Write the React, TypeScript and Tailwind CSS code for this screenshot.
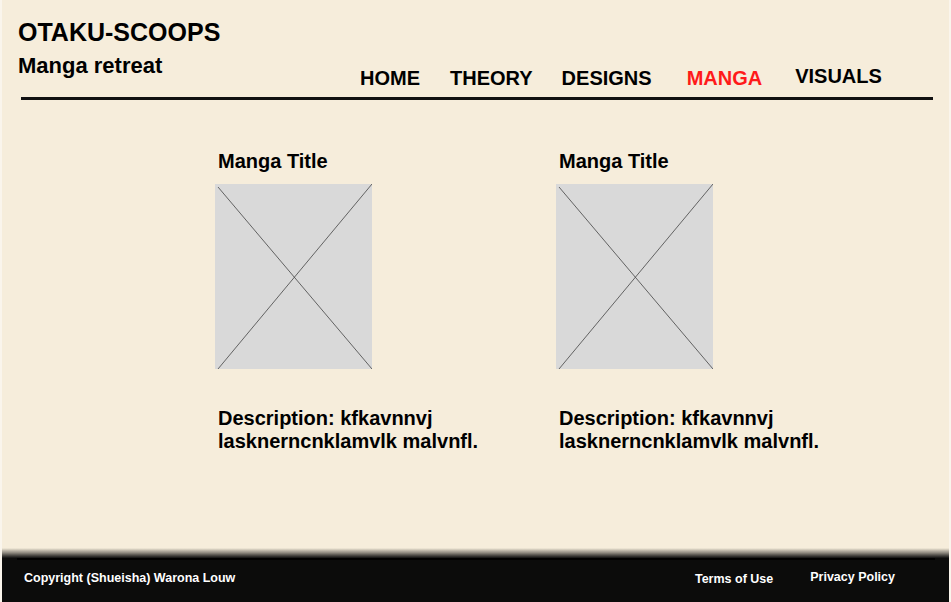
import React from 'react';

function Placeholder() {
  return (
    <div className="w-[157px] h-[185px] bg-[#d9d9d9]">
      <svg width="157" height="185" viewBox="0 0 157 185">
        <line x1="3" y1="3" x2="157" y2="185" stroke="#444" strokeWidth="0.8" />
        <line x1="157" y1="0" x2="3" y2="185" stroke="#444" strokeWidth="0.8" />
      </svg>
    </div>
  );
}

function MangaCard() {
  return (
    <div className="w-[300px]">
      <h2 className="pl-[3px] text-[20px] font-bold leading-none text-black">Manga Title</h2>
      <div className="mt-[13px]">
        <Placeholder />
      </div>
      <p className="mt-[38px] pl-[3px] text-[20px] font-bold leading-[23px] text-black">
        Description: kfkavnnvj
        <br />
        lasknerncnklamvlk malvnfl.
      </p>
    </div>
  );
}

export default function App() {
  return (
    <div
      className="w-[951px] h-[602px] flex flex-col bg-[#f6eddb] border-x-2 border-[#faf5ec] overflow-hidden"
      style={{ fontFamily: '"Liberation Sans", Arial, sans-serif' }}
    >
      {/* Header */}
      <header className="relative h-[101px]">
        <div className="pl-[16px] pt-[20px]">
          <h1 className="text-[25px] font-bold leading-none text-black">OTAKU-SCOOPS</h1>
          <p className="mt-[10px] text-[22px] font-bold leading-none text-black">Manga retreat</p>
        </div>
        <nav className="absolute left-[358px] top-[66px] flex items-end text-[20px] font-bold leading-none">
          <span className="text-black">HOME</span>
          <span className="ml-[30px] text-black">THEORY</span>
          <span className="ml-[29px] text-black">DESIGNS</span>
          <span className="ml-[35px] text-[#ff1a1a]">MANGA</span>
          <span className="ml-[33px] mb-[2px] text-black">VISUALS</span>
        </nav>
        <div className="absolute left-[19px] top-[97px] w-[912px] h-[3px] bg-[#111]" />
      </header>

      {/* Content */}
      <main className="flex-1 flex pl-[213px] pt-[50px] gap-[41px]">
        <MangaCard />
        <MangaCard />
      </main>

      {/* Footer */}
      <div className="h-[10px] bg-gradient-to-b from-[#f6eddb] via-[#8a857b] to-[#111]" />
      <footer className="h-[44px] bg-[#0c0c0b] relative">
        <div className="absolute left-[15px] top-0 w-[918px] h-[2px] bg-black" />
        <div className="flex items-center justify-between h-full pl-[22px] pr-[54px] pb-[4px] text-[12.5px] font-bold text-white">
          <span>Copyright (Shueisha) Warona Louw</span>
          <div className="flex gap-[37px]">
            <span className="mt-[2px]">Terms of Use</span>
            <span>Privacy Policy</span>
          </div>
        </div>
      </footer>
    </div>
  );
}
